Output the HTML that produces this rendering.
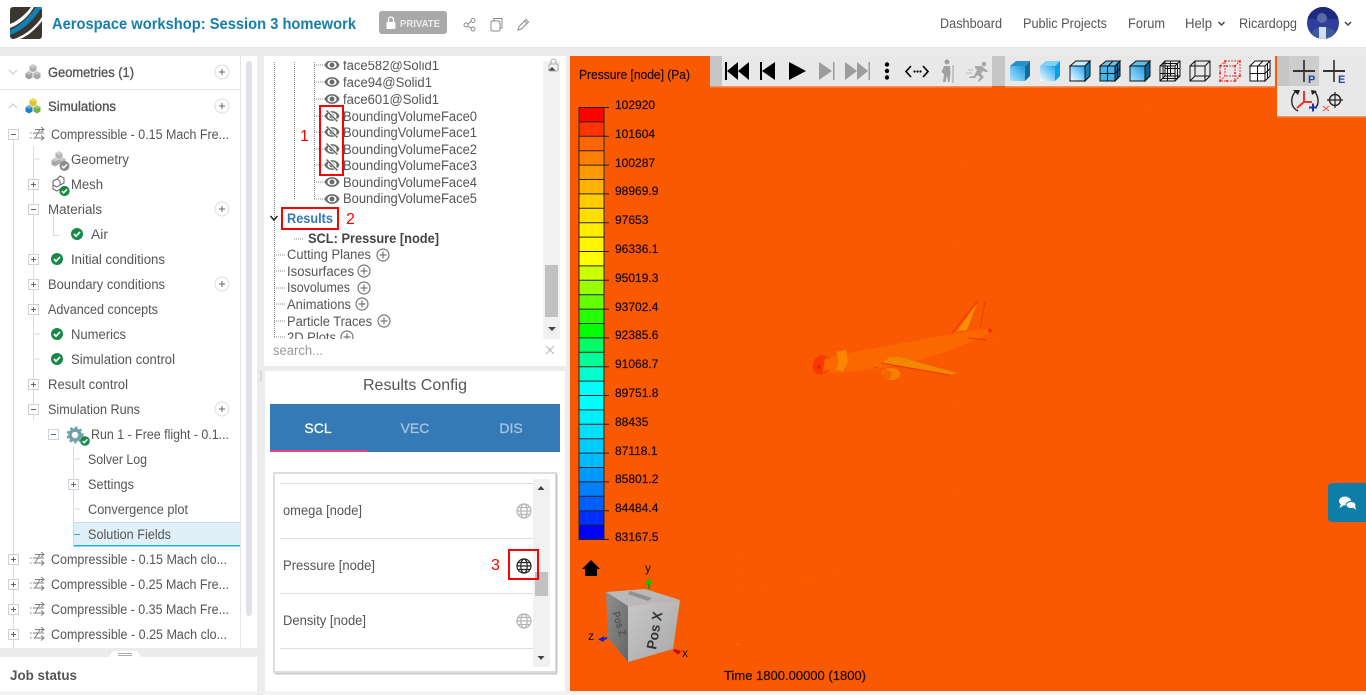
<!DOCTYPE html>
<html lang="en"><head><meta charset="utf-8"><title>Aerospace workshop: Session 3 homework</title>
<style>
html,body{margin:0;padding:0;width:1366px;height:695px;overflow:hidden;background:#ececec}
svg{display:block}
text{font-family:"Liberation Sans",sans-serif}
.t{font-size:13.5px;fill:#555}
.m{font-size:13.5px;fill:#555}
.l{font-size:12px;fill:#1c0a00;stroke:#1c0a00;stroke-width:.2px}
.red{font-size:16px;fill:#f00}
.ln{stroke:#dcdcdc;stroke-width:1;fill:none}
.dot{stroke:#888;stroke-width:1;stroke-dasharray:1 1;fill:none}
</style></head><body>
<svg width="1366" height="695" viewBox="0 0 1366 695" xmlns="http://www.w3.org/2000/svg">
<defs>
<linearGradient id="g1" x1="0" y1="1" x2="1" y2="0"><stop offset="0" stop-color="#a9e6ff"/><stop offset="1" stop-color="#1d96dc"/></linearGradient>
<linearGradient id="g2" x1="0" y1="1" x2="1" y2="0"><stop offset="0" stop-color="#fff"/><stop offset="1" stop-color="#1ea6ee"/></linearGradient>
<linearGradient id="g3" x1="0" y1="0" x2="1" y2="1"><stop offset="0" stop-color="#8f8f8f"/><stop offset="1" stop-color="#666"/></linearGradient>
<linearGradient id="g4" x1="0" y1="0" x2="1" y2="1"><stop offset="0" stop-color="#c8c8c8"/><stop offset="1" stop-color="#a8a8a8"/></linearGradient>
<g id="eye"><path d="M-7.500 0C-5-6.500 5-6.500 7.500 0C5 6.500-5 6.500-7.500 0Z" fill="#6a6a6a"/><ellipse rx="4.600" ry="3.400" fill="#fff"/><circle r="2.500" fill="#6a6a6a"/></g>
<g id="eyex"><use href="#eye"/><path d="M-5-6L6 6" stroke="#fff" stroke-width="3"/><path d="M-5.500-5.500L5.500 5.500" stroke="#666" stroke-width="1.500"/></g>
<g id="ok"><circle r="6" fill="#138a45"/><path d="M-3 0L-1 2.200L3-2" stroke="#fff" stroke-width="1.800" fill="none"/></g>
<g id="okg"><circle r="5" fill="#8c8c8c"/><path d="M-2.500 0L-.8 1.800L2.500-1.700" stroke="#fff" stroke-width="1.400" fill="none"/></g>
<g id="pb"><rect x="-4.500" y="-4.500" width="10" height="10" fill="#fff" stroke="#ccd2d8"/><path d="M-2 .5H3M.5-2V3" stroke="#666"/></g>
<g id="mb"><rect x="-4.500" y="-4.500" width="10" height="10" fill="#fff" stroke="#ccd2d8"/><path d="M-2 .5H3" stroke="#666"/></g>
<g id="pc"><circle r="7" fill="#fff" stroke="#dcdcdc"/><path d="M-3 0H3M0-3V3" stroke="#666"/></g>
<g id="pa"><circle r="6" fill="#fff" stroke="#777" stroke-width="1.200"/><path d="M-3.500 0H3.500M0-3.500V3.500" stroke="#777" stroke-width="1.200"/></g>
<g id="flow" fill="none" stroke="#808080" stroke-width="1"><path d="M-7-1H-5.500M-7 4H-5.500M-4-1H7M-2-4.500H6.500M-3.500 4H6.500M-2 4L3-4.500"/><path d="M4-7L7-4.500L4-2M4 1.500L7 4L4 6.500"/></g>
<g id="cb"><path d="M-3.500-2L0-4L3.500-2V2.500L0 4.500L-3.500 2.500Z"/><path d="M-3.500-2L0-4L3.500-2L0 0Z" fill="#fff" opacity=".35"/></g>
<g id="globe" fill="none" stroke-width="1.200"><circle r="7"/><ellipse rx="3.200" ry="7"/><path d="M-7 0H7M-6-3.500H6M-6 3.500H6"/></g>
<g id="wire" fill="none" stroke="#111" stroke-width="1"><rect x="-10" y="-5" width="15" height="15"/><rect x="-5" y="-10" width="15" height="15"/><path d="M-10-5L-5-10M5-5L10-10M5 10L10 5M-10 10L-5 5"/></g>
<clipPath id="c1"><rect x="266" y="61" width="278" height="278"/></clipPath>
<clipPath id="c2"><circle cx="1323" cy="23" r="16"/></clipPath>
</defs>

<!-- header -->
<rect width="1366" height="47" fill="#fff"/><rect y="47" width="1366" height="2" fill="#e9e9e9"/>
<rect x="10" y="7" width="32" height="32" rx="3" fill="#3a3632"/>
<path d="M10 30C20 26 30 16 36 7H42C34 20 22 31 10 35Z" fill="#1181b3"/>
<path d="M10 24C18 21 26 14 31 7H34C28 17 20 24 10 28Z" fill="#fff"/>
<path d="M14 39C26 35 36 26 42 17V21C36 29 28 36 20 39Z" fill="#fff"/>
<text x="52" y="29" font-size="15.500" font-weight="700" fill="#177ea9" textLength="304" lengthAdjust="spacingAndGlyphs">Aerospace workshop: Session 3 homework</text>
<rect x="379" y="11" width="68" height="23" rx="3" fill="#a9a9a9"/>
<rect x="386.500" y="22" width="9" height="7" rx="1" fill="#fff"/><path d="M388.500 22V19.500a2.500 2.500 0 0 1 5 0V22" fill="none" stroke="#fff" stroke-width="1.300"/>
<text x="400" y="27" font-size="10.500" font-weight="700" fill="#ececec" textLength="40" lengthAdjust="spacingAndGlyphs">PRIVATE</text>
<g fill="none" stroke="#8a8a8a" stroke-width="1"><circle cx="466" cy="25" r="2"/><circle cx="473" cy="20.500" r="2"/><circle cx="473" cy="29" r="2"/><path d="M468 24L471 21.500M468 26L471 28"/>
<rect x="491" y="21" width="9" height="10" rx="1.500"/><path d="M494 21V18.500H502V28H500"/>
<path d="M518 30L519 26.500L526 19.500L528.500 22L521.500 29Z M524.500 21L527 23.500"/></g>
<g font-size="13.500" fill="#555">
<text x="940" y="28" textLength="62" lengthAdjust="spacingAndGlyphs">Dashboard</text>
<text x="1023" y="28" textLength="84" lengthAdjust="spacingAndGlyphs">Public Projects</text>
<text x="1128" y="28" textLength="37" lengthAdjust="spacingAndGlyphs">Forum</text>
<text x="1185" y="28" textLength="27" lengthAdjust="spacingAndGlyphs">Help</text>
<text x="1239" y="28" textLength="58" lengthAdjust="spacingAndGlyphs">Ricardopg</text></g>
<path d="M1218.500 22L1221.500 25L1224.500 22M1345 22L1348 25L1351 22" fill="none" stroke="#444" stroke-width="1.500"/>
<circle cx="1323" cy="23" r="16" fill="#2f3d9c"/>
<g clip-path="url(#c2)"><rect x="1307" y="7" width="32" height="12" fill="#1c2a80"/><circle cx="1322" cy="18" r="5" fill="#5a6aa8"/><path d="M1310 40L1313 30L1320 27H1326L1334 30L1337 40Z" fill="#3e5a9a"/><rect x="1319" y="27" width="7" height="12" fill="#cfe0ea"/></g>

<!-- left panel -->
<rect x="0" y="56" width="257" height="592" fill="#fff"/>
<rect x="240" y="56" width="1" height="592" fill="#e4e4e4"/>
<rect x="246" y="61" width="6" height="555" rx="3" fill="#dee2e6"/>
<rect x="0" y="89" width="240" height="1" fill="#e8e8e8"/>
<path d="M9 70L13 74L17 70M9 108L13 104L17 108" fill="none" stroke="#ccc" stroke-width="1.200"/>
<use href="#cb" x="33" y="68" fill="#b0b0b0"/><use href="#cb" x="29" y="75" fill="#a0a0a0"/><use href="#cb" x="37" y="75" fill="#a8a8a8"/>
<use href="#cb" x="33" y="102" fill="#e0c418"/><use href="#cb" x="29" y="109" fill="#1c7ec4"/><use href="#cb" x="37" y="109" fill="#6cb33f"/>
<text x="48" y="77" font-size="13.500" fill="#555" stroke="#555" stroke-width=".35" textLength="86" lengthAdjust="spacingAndGlyphs">Geometries (1)</text>
<text x="48" y="111" font-size="13.500" fill="#555" stroke="#555" stroke-width=".35" textLength="68" lengthAdjust="spacingAndGlyphs">Simulations</text>
<use href="#pc" x="222" y="72"/><use href="#pc" x="222" y="106"/>
<path class="ln" d="M13.500 139V648M33.500 146V420M33.500 159H40M33.500 334H40M33.500 359H40M53.500 215V235.500H60M73.500 446V534M73.500 459H80M73.500 509H80"/>
<use href="#flow" x="37" y="134"/><use href="#flow" x="37" y="559"/><use href="#flow" x="37" y="584"/><use href="#flow" x="37" y="609"/><use href="#flow" x="37" y="634"/>
<use href="#mb" x="13" y="134"/><use href="#pb" x="33" y="184"/><use href="#mb" x="33" y="209"/><use href="#pb" x="33" y="259"/><use href="#pb" x="33" y="284"/><use href="#pb" x="33" y="309"/><use href="#pb" x="33" y="384"/><use href="#mb" x="33" y="409"/><use href="#mb" x="53" y="434"/><use href="#pb" x="73" y="484"/><use href="#pb" x="13" y="559"/><use href="#pb" x="13" y="584"/><use href="#pb" x="13" y="609"/><use href="#pb" x="13" y="634"/>
<use href="#pc" x="222" y="209"/><use href="#pc" x="222" y="284"/><use href="#pc" x="222" y="409"/>
<use href="#cb" x="59" y="155" fill="#b5b5b5"/><use href="#cb" x="55" y="162" fill="#a8a8a8"/><use href="#cb" x="62" y="161" fill="#b0b0b0"/><use href="#okg" x="64.500" y="166"/>
<g fill="none" stroke="#666"><path d="M53 181L57 179L60 181V185L57 187L53 185Z M57 179L60 176L64 178V183L60 185M53 185V189L57 191L60 189"/></g><use href="#ok" transform="translate(64.500 191) scale(.85)"/>
<use href="#ok" x="77" y="234"/><use href="#ok" x="57" y="259"/><use href="#ok" x="57" y="334"/><use href="#ok" x="57" y="359"/>
<circle cx="75" cy="435" r="5" fill="none" stroke="#6da3a8" stroke-width="3.500"/><circle cx="75" cy="435" r="7.500" fill="none" stroke="#6da3a8" stroke-width="2" stroke-dasharray="2.500 2.500"/><use href="#ok" transform="translate(85 441) scale(.8)"/>
<rect x="73" y="522" width="167" height="24" fill="#e0f0f8"/><rect x="73" y="545" width="167" height="1.500" fill="#19b0ea"/><rect x="73" y="522" width="167" height="1" fill="#c4dbe6"/><rect x="73" y="522" width="1" height="24" fill="#c4dbe6"/><rect x="74" y="534" width="6" height="1" fill="#19b0ea"/>
<text class="t" x="51" y="139" textLength="178" lengthAdjust="spacingAndGlyphs">Compressible - 0.15 Mach Fre...</text>
<text class="t" x="71" y="164" textLength="58" lengthAdjust="spacingAndGlyphs">Geometry</text>
<text class="t" x="71" y="189" textLength="32" lengthAdjust="spacingAndGlyphs">Mesh</text>
<text class="t" x="48" y="214" textLength="54" lengthAdjust="spacingAndGlyphs">Materials</text>
<text class="t" x="91" y="239" textLength="17" lengthAdjust="spacingAndGlyphs">Air</text>
<text class="t" x="71" y="264" textLength="94" lengthAdjust="spacingAndGlyphs">Initial conditions</text>
<text class="t" x="48" y="289" textLength="117" lengthAdjust="spacingAndGlyphs">Boundary conditions</text>
<text class="t" x="48" y="314" textLength="110" lengthAdjust="spacingAndGlyphs">Advanced concepts</text>
<text class="t" x="71" y="339" textLength="55" lengthAdjust="spacingAndGlyphs">Numerics</text>
<text class="t" x="71" y="364" textLength="104" lengthAdjust="spacingAndGlyphs">Simulation control</text>
<text class="t" x="48" y="389" textLength="80" lengthAdjust="spacingAndGlyphs">Result control</text>
<text class="t" x="48" y="414" textLength="92" lengthAdjust="spacingAndGlyphs">Simulation Runs</text>
<text class="t" x="91" y="439" textLength="138" lengthAdjust="spacingAndGlyphs">Run 1 - Free flight - 0.1...</text>
<text class="t" x="88" y="464" textLength="59" lengthAdjust="spacingAndGlyphs">Solver Log</text>
<text class="t" x="88" y="489" textLength="46" lengthAdjust="spacingAndGlyphs">Settings</text>
<text class="t" x="88" y="514" textLength="100" lengthAdjust="spacingAndGlyphs">Convergence plot</text>
<text class="t" x="88" y="539" textLength="83" lengthAdjust="spacingAndGlyphs">Solution Fields</text>
<text class="t" x="51" y="564" textLength="176" lengthAdjust="spacingAndGlyphs">Compressible - 0.15 Mach clo...</text>
<text class="t" x="51" y="589" textLength="178" lengthAdjust="spacingAndGlyphs">Compressible - 0.25 Mach Fre...</text>
<text class="t" x="51" y="614" textLength="178" lengthAdjust="spacingAndGlyphs">Compressible - 0.35 Mach Fre...</text>
<text class="t" x="51" y="639" textLength="176" lengthAdjust="spacingAndGlyphs">Compressible - 0.25 Mach clo...</text>
<!-- job status -->
<path d="M109 657L113 651H137L141 657Z" fill="#fff"/><path d="M118 653.500H132M118 655.500H132" stroke="#aaa"/>
<rect x="0" y="657" width="257" height="36" fill="#fff"/>
<text x="10" y="680" font-size="14" font-weight="700" fill="#555" textLength="67" lengthAdjust="spacingAndGlyphs">Job status</text>

<!-- middle top panel -->
<rect x="260" y="370" width="2" height="12" fill="#dcdcdc"/>
<rect x="264" y="56" width="302" height="310" fill="#fff"/>
<rect x="543" y="61" width="17" height="278" fill="#f1f1f1"/>
<rect x="545" y="265" width="13" height="52" fill="#c1c1c1"/>
<path d="M548 71L552 67L556 71Z M548 327H556L552 331Z" fill="#444"/>
<rect x="549" y="64" width="9" height="7" rx="1" fill="none" stroke="#aaa"/><path d="M551 64V61.500a2.500 2.500 0 0 1 5 0V64" fill="none" stroke="#aaa"/>
<g clip-path="url(#c1)">
<path class="dot" d="M274.500 60V338M294.500 60V199M314.500 60V199M314 65H325M314 82H325M314 99H325M314 116H325M314 132H325M314 149H325M314 165H325M314 182H325M314 199H325M294 239H304M274 255H285M274 271H285M274 288H285M274 304H285M274 321H285M274 337H285"/>
<use href="#eye" x="332" y="65"/><use href="#eye" x="332" y="82"/><use href="#eye" x="332" y="99"/><use href="#eyex" x="332" y="116"/><use href="#eyex" x="332" y="132"/><use href="#eyex" x="332" y="149"/><use href="#eyex" x="332" y="165"/><use href="#eye" x="332" y="182"/><use href="#eye" x="332" y="199"/>
<text class="m" x="343" y="70" textLength="96" lengthAdjust="spacingAndGlyphs">face582@Solid1</text>
<text class="m" x="343" y="87" textLength="89" lengthAdjust="spacingAndGlyphs">face94@Solid1</text>
<text class="m" x="343" y="104" textLength="96" lengthAdjust="spacingAndGlyphs">face601@Solid1</text>
<text class="m" x="343" y="121" textLength="134" lengthAdjust="spacingAndGlyphs">BoundingVolumeFace0</text>
<text class="m" x="343" y="137" textLength="134" lengthAdjust="spacingAndGlyphs">BoundingVolumeFace1</text>
<text class="m" x="343" y="154" textLength="134" lengthAdjust="spacingAndGlyphs">BoundingVolumeFace2</text>
<text class="m" x="343" y="170" textLength="134" lengthAdjust="spacingAndGlyphs">BoundingVolumeFace3</text>
<text class="m" x="343" y="187" textLength="134" lengthAdjust="spacingAndGlyphs">BoundingVolumeFace4</text>
<text class="m" x="343" y="203" textLength="134" lengthAdjust="spacingAndGlyphs">BoundingVolumeFace5</text>
<path d="M270.500 216L274 220L277.500 216" fill="none" stroke="#222" stroke-width="1.500"/>
<text x="287" y="223" font-size="13.500" font-weight="700" fill="#337ab7" textLength="46" lengthAdjust="spacingAndGlyphs">Results</text>
<text x="308" y="243" font-size="13.500" font-weight="700" fill="#444" textLength="131" lengthAdjust="spacingAndGlyphs">SCL: Pressure [node]</text>
<text class="m" x="287" y="259" textLength="84" lengthAdjust="spacingAndGlyphs">Cutting Planes</text>
<text class="m" x="287" y="276" textLength="67" lengthAdjust="spacingAndGlyphs">Isosurfaces</text>
<text class="m" x="287" y="292" textLength="63" lengthAdjust="spacingAndGlyphs">Isovolumes</text>
<text class="m" x="287" y="309" textLength="64" lengthAdjust="spacingAndGlyphs">Animations</text>
<text class="m" x="287" y="326" textLength="85" lengthAdjust="spacingAndGlyphs">Particle Traces</text>
<text class="m" x="287" y="342" textLength="49" lengthAdjust="spacingAndGlyphs">2D Plots</text>
<use href="#pa" x="383" y="255"/><use href="#pa" x="364" y="271"/><use href="#pa" x="364" y="288"/><use href="#pa" x="362" y="304"/><use href="#pa" x="384" y="321"/><use href="#pa" x="347" y="337"/>
</g>
<text x="273" y="355" font-size="13.500" fill="#999" textLength="50" lengthAdjust="spacingAndGlyphs">search...</text>
<path d="M546 346L554 354M554 346L546 354" stroke="#bbb" stroke-width="1.200"/>
<rect x="320" y="106" width="23" height="69" fill="none" stroke="#f00" stroke-width="2"/>
<rect x="282" y="208" width="56" height="21" fill="none" stroke="#f00" stroke-width="2"/>
<text class="red" x="300" y="141">1</text><text class="red" x="346" y="224">2</text>

<!-- results config -->
<rect x="265" y="371" width="300" height="323" fill="#fff"/>
<text x="363" y="390" font-size="16" fill="#555" textLength="104" lengthAdjust="spacingAndGlyphs">Results Config</text>
<rect x="270" y="404" width="290" height="48" fill="#337ab7"/>
<rect x="270" y="450" width="97" height="2" fill="#ee3f80"/>
<text x="318" y="433" font-size="14" text-anchor="middle" fill="#fff" stroke="#fff" stroke-width=".3">SCL</text>
<text x="415" y="433" font-size="14" text-anchor="middle" fill="#a9c4de" stroke="#a9c4de" stroke-width=".3">VEC</text>
<text x="511" y="433" font-size="14" text-anchor="middle" fill="#a9c4de" stroke="#a9c4de" stroke-width=".3">DIS</text>
<rect x="274" y="473" width="282" height="199" fill="#fff" stroke="#ddd" stroke-width="2"/>
<rect x="556" y="474" width="1.500" height="200" fill="#c8c8c8"/><rect x="275" y="673" width="282" height="1.500" fill="#c8c8c8"/>
<path d="M280 483.500H533M280 538.500H533M280 593.500H533M280 648.500H533" stroke="#ddd"/>
<rect x="533" y="479" width="17" height="188" fill="#f1f1f1"/>
<rect x="535" y="572" width="13" height="24" fill="#c1c1c1"/>
<path d="M537.500 490L541 486L544.500 490Z M537.500 656H544.500L541 660Z" fill="#444"/>
<text class="m" x="283" y="515" textLength="79" lengthAdjust="spacingAndGlyphs">omega [node]</text>
<text class="m" x="283" y="570" textLength="92" lengthAdjust="spacingAndGlyphs">Pressure [node]</text>
<text class="m" x="283" y="625" textLength="83" lengthAdjust="spacingAndGlyphs">Density [node]</text>
<use href="#globe" x="524" y="511" stroke="#b5b5b5"/><use href="#globe" x="524" y="566" stroke="#222"/><use href="#globe" x="524" y="621" stroke="#b5b5b5"/>
<rect x="509" y="550" width="29" height="29" fill="none" stroke="#f00" stroke-width="2"/>
<text class="red" x="491" y="570">3</text>

<!-- viewer -->
<rect x="570" y="56" width="796" height="635" fill="#f95900"/>
<rect x="0" y="691" width="1366" height="4" fill="#f3f3f3"/><rect x="257" y="693" width="6" height="2" fill="#ececec"/>
<g fill="#ff8a3a" opacity=".55"><rect x="741" y="558" width="1" height="1"/><rect x="742" y="573" width="1" height="1"/><rect x="743" y="587" width="1" height="1"/><rect x="760" y="586" width="1" height="1"/><rect x="800" y="580" width="1" height="1"/><rect x="810" y="577" width="1" height="1"/><rect x="835" y="574" width="1" height="1"/><rect x="737" y="644" width="3" height="1"/><rect x="960" y="160" width="1" height="1"/><rect x="958" y="240" width="1" height="1"/><rect x="955" y="400" width="1" height="1"/><rect x="955" y="490" width="1" height="1"/><rect x="1148" y="105" width="1" height="1"/></g>
<text class="l" x="579" y="79" style="font-size:12.500px" textLength="111" lengthAdjust="spacingAndGlyphs">Pressure [node] (Pa)</text>
<!-- colorbar -->
<g stroke="none">
<rect x="579" y="107.500" width="25" height="14.400" fill="#ff0000"/><rect x="579" y="121.900" width="25" height="14.400" fill="#ff3300"/><rect x="579" y="136.300" width="25" height="14.400" fill="#ff6600"/><rect x="579" y="150.700" width="25" height="14.400" fill="#ff8000"/><rect x="579" y="165.100" width="25" height="14.400" fill="#ff9900"/><rect x="579" y="179.500" width="25" height="14.400" fill="#ffb300"/><rect x="579" y="193.900" width="25" height="14.400" fill="#ffcc00"/><rect x="579" y="208.300" width="25" height="14.400" fill="#ffdf00"/><rect x="579" y="222.700" width="25" height="14.400" fill="#ffee00"/><rect x="579" y="237.100" width="25" height="14.400" fill="#fff700"/><rect x="579" y="251.500" width="25" height="14.400" fill="#ffff00"/><rect x="579" y="265.900" width="25" height="14.400" fill="#ccff00"/><rect x="579" y="280.300" width="25" height="14.400" fill="#99ff00"/><rect x="579" y="294.700" width="25" height="14.400" fill="#66ff00"/><rect x="579" y="309.100" width="25" height="14.400" fill="#22ff00"/><rect x="579" y="323.500" width="25" height="14.400" fill="#00ff00"/><rect x="579" y="337.900" width="25" height="14.400" fill="#00ff66"/><rect x="579" y="352.300" width="25" height="14.400" fill="#00ff99"/><rect x="579" y="366.700" width="25" height="14.400" fill="#00ffcc"/><rect x="579" y="381.100" width="25" height="14.400" fill="#00ffff"/><rect x="579" y="395.500" width="25" height="14.400" fill="#00ffff"/><rect x="579" y="409.900" width="25" height="14.400" fill="#00f0ff"/><rect x="579" y="424.300" width="25" height="14.400" fill="#00e0ff"/><rect x="579" y="438.700" width="25" height="14.400" fill="#00ccff"/><rect x="579" y="453.100" width="25" height="14.400" fill="#00bbff"/><rect x="579" y="467.500" width="25" height="14.400" fill="#0099ff"/><rect x="579" y="481.900" width="25" height="14.400" fill="#0080ff"/><rect x="579" y="496.300" width="25" height="14.400" fill="#0060ff"/><rect x="579" y="510.700" width="25" height="14.400" fill="#0030ff"/><rect x="579" y="525.100" width="25" height="14.400" fill="#0000ff"/>
</g>
<path d="M579 107.500V539.500H604V107.500M579 107.500H609M579 121.900H604M579 136.300H609M579 150.700H604M579 165.100H609M579 179.500H604M579 193.900H609M579 208.300H604M579 222.700H609M579 237.100H604M579 251.500H609M579 265.900H604M579 280.300H609M579 294.700H604M579 309.100H609M579 323.500H604M579 337.900H609M579 352.300H604M579 366.700H609M579 381.100H604M579 395.500H609M579 409.900H604M579 424.300H609M579 438.700H604M579 453.100H609M579 467.500H604M579 481.900H609M579 496.300H604M579 510.700H609M579 525.100H604M604 539.500H609" fill="none" stroke="#222" stroke-width="1"/>
<text class="l" x="615" y="109">102920</text><text class="l" x="615" y="138">101604</text><text class="l" x="615" y="167">100287</text><text class="l" x="615" y="195">98969.9</text><text class="l" x="615" y="224">97653</text><text class="l" x="615" y="253">96336.1</text><text class="l" x="615" y="282">95019.3</text><text class="l" x="615" y="311">93702.4</text><text class="l" x="615" y="339">92385.6</text><text class="l" x="615" y="368">91068.7</text><text class="l" x="615" y="397">89751.8</text><text class="l" x="615" y="426">88435</text><text class="l" x="615" y="455">87118.1</text><text class="l" x="615" y="483">85801.2</text><text class="l" x="615" y="512">84484.4</text><text class="l" x="615" y="541">83167.5</text>
<!-- plane -->
<g>
<path d="M830 357C890 345 960 332 988 329L991 332C975 340 950 352 925 358C890 368 860 371 830 373Z" fill="#fb6800"/>
<path d="M836 352L846 350L848 362L843 371L836 370C839 364 839 358 836 352Z" fill="#fb8600"/>
<ellipse cx="821" cy="365" rx="8" ry="10" transform="rotate(20 821 365)" fill="#f83a00"/><path d="M825 358L831 360L830 368L823 372Z" fill="#fb6c00"/><circle cx="819" cy="367" r="1.500" fill="#e01800"/>
<path d="M957 331L977 303L967 330Z" fill="#fb9000"/><path d="M952 333L977 302" stroke="#f03800" stroke-width="1" fill="none"/><path d="M985 302L980 328" stroke="#f44000" fill="none"/>
<path d="M882 363L890 357L900 357L917 362L957 373L950 375Z" fill="#f08800"/><path d="M881 363L950 375" stroke="#f43000" stroke-width="1"/>
<circle cx="990" cy="330.500" r="2" fill="#f03000"/><path d="M968 338L996 341L998 341L978 339Z" fill="#f07a00"/><path d="M968 338L986 340" stroke="#f43000"/>
<ellipse cx="891" cy="374" rx="9" ry="6" fill="#f48400"/><ellipse cx="887" cy="375" rx="4.500" ry="5" fill="#f26500"/><path d="M871 368L880 366L877 368Z" fill="#f04500"/>
</g>
<!-- home, axes, cube -->
<path d="M591 560L600 569H597V576H585V569H582Z" fill="#000"/>
<polygon points="606,592 645,589 680,600 628,606" fill="#b9b9b9"/>
<polygon points="628,606 680,600 673,649 628,662" fill="url(#g4)"/>
<polygon points="606,592 628,606 628,662 608,638" fill="url(#g3)"/>
<text transform="translate(656 650) rotate(-80)" font-size="14" font-weight="700" fill="#333" textLength="38" lengthAdjust="spacingAndGlyphs">Pos X</text>
<text transform="translate(612 613) rotate(72)" font-size="11" font-weight="700" fill="#444" opacity=".7" textLength="25" lengthAdjust="spacingAndGlyphs">Pos Z</text>
<path d="M630 591L652 598L648 601L628 594Z" fill="#555" opacity=".4"/>
<path d="M649 589V582" stroke="#0a0" stroke-width="2"/><path d="M645.500 584L649 578L652.500 584Z" fill="#0c0"/>
<path d="M607 638L601 639.500" stroke="#1020d0" stroke-width="2"/><path d="M604 636L598 639.500L604 642Z" fill="#1020d0"/>
<path d="M674 650L679 653" stroke="#c00" stroke-width="2.500"/><path d="M674 649L681 651L678 655Z" fill="#d00000"/>
<text x="645" y="572" font-size="12" fill="#111">y</text><text x="588" y="640" font-size="12" fill="#111">z</text><text x="682" y="657" font-size="12" fill="#111">x</text>
<text class="l" x="724" y="680" style="font-size:13px" textLength="142" lengthAdjust="spacingAndGlyphs">Time 1800.00000 (1800)</text>

<!-- toolbars -->
<rect x="710" y="86" width="282" height="1.500" fill="#f4905a"/><rect x="1005" y="86" width="270" height="1.500" fill="#f4905a"/><rect x="1277" y="116" width="89" height="1.500" fill="#f4905a"/>
<rect x="710" y="56" width="282" height="30" fill="#e8e8e8"/><rect x="710" y="56" width="12" height="30" fill="#c6c6c6"/>
<rect x="992" y="56" width="13" height="30" fill="#c6c6c6"/><rect x="1005" y="56" width="270" height="30" fill="#e8e8e8"/>
<rect x="1277" y="56" width="89" height="60" fill="#e8e8e8"/><rect x="1277" y="56" width="12" height="30" fill="#c6c6c6"/><rect x="1289" y="56" width="30" height="30" fill="#cdcdcd"/>
<rect x="725" y="62" width="2" height="18" fill="#000"/><path d="M727 71L738 62V80Z M738 71L749 62V80Z" fill="#000"/>
<rect x="760" y="62" width="2" height="18" fill="#000"/><path d="M762 71L775 62V80Z" fill="#000"/>
<path d="M789 62L806 71L789 80Z" fill="#000"/>
<path d="M819 62L832 71L819 80Z" fill="#9c9c9c"/><rect x="833" y="62" width="1.500" height="18" fill="#9c9c9c"/>
<path d="M845 62L857 71L845 80Z M857 62L868 71L857 80Z" fill="#9c9c9c"/><rect x="868.500" y="62" width="1.500" height="18" fill="#9c9c9c"/>
<circle cx="887" cy="64.500" r="2.200"/><circle cx="887" cy="71" r="2.200"/><circle cx="887" cy="77.500" r="2.200"/>
<path d="M911 66L906 71.500L911 77M923 66L928 71.500L923 77" fill="none" stroke="#000" stroke-width="1.600"/><circle cx="914.500" cy="71.500" r="1.100"/><circle cx="917.500" cy="71.500" r="1.100"/><circle cx="920.500" cy="71.500" r="1.100"/>
<g fill="#a0a0a0"><circle cx="947" cy="62" r="2.500"/><path d="M944 66H950L950.500 73L949.500 82H948L947 75L945.500 82H943L944 74L941.500 72Z"/><rect x="952.500" y="65" width="1" height="18"/></g>
<g fill="#a8a8a8"><circle cx="984" cy="64" r="2.300"/><path d="M975 66L982 66L985 69L988 71L987 72.500L983 71L981 74L984 77L979 82L978 80.500L980.500 77L977 75L975 78L969 78L970 76.500L974 76L977 70L975 68Z"/><path d="M968 70H973M966 73H972" stroke="#bbb"/></g>
<!-- cubes -->
<g transform="translate(1020 71)"><rect x="-10" y="-5" width="15" height="15" fill="url(#g1)"/><polygon points="5,-5 10,-10 10,5 5,10" fill="#136a9b"/><polygon points="-10,-5 -4,-10 10,-10 5,-5" fill="#2b8fca"/></g>
<g transform="translate(1050 71)"><rect x="-10" y="-5" width="15" height="15" fill="url(#g2)"/><polygon points="-10,-5 -4,-10 10,-10 5,-5" fill="#7dd0f8"/><polygon points="5,-5 10,-10 10,5 5,10" fill="#08a0ea"/></g>
<g transform="translate(1080 71)" stroke="#111"><rect x="-10" y="-5" width="15" height="15" fill="url(#g2)"/><polygon points="-10,-5 -4,-10 10,-10 5,-5" fill="#c8ecff"/><polygon points="5,-5 10,-10 10,5 5,10" fill="#1680bc"/></g>
<g transform="translate(1110 71)" stroke="#111"><rect x="-10" y="-5" width="15" height="15" fill="#49b4ea"/><polygon points="-10,-5 -4,-10 10,-10 5,-5" fill="#6cc4ee"/><polygon points="5,-5 10,-10 10,5 5,10" fill="#126a9e"/><path d="M-2.500-5V10M-10 2.500H5M-2-5L3-10M7.500-7.500V7.500M5 2.500L10-2.500" fill="none"/></g>
<g transform="translate(1140 71)" stroke="#111"><rect x="-10" y="-5" width="15" height="15" fill="url(#g1)"/><polygon points="-10,-5 -4,-10 10,-10 5,-5" fill="#5fbde8"/><polygon points="5,-5 10,-10 10,5 5,10" fill="#0f5f8f"/></g>
<g transform="translate(1170 71)"><use href="#wire"/><path d="M-2.500-5V10M-10 2.500H5M.5-10V5M-5-2.500H10M-7-7.500H7.500M7.500-7.500V7.500M-7-7.500V7.500M-7 7.500H7.500" stroke="#111" fill="none"/></g>
<g transform="translate(1200 71)"><use href="#wire"/></g>
<g transform="translate(1230 71)" fill="none" stroke="#e33" stroke-width="1" stroke-dasharray="2 1"><rect x="-10" y="-5" width="15" height="15"/><rect x="-5" y="-10" width="15" height="15"/><path d="M-10-5L-5-10M5-5L10-10M5 10L10 5M-10 10L-5 5"/></g>
<g fill="#e22"><circle cx="1220" cy="66" r="1"/><circle cx="1235" cy="66" r="1"/><circle cx="1220" cy="81" r="1"/><circle cx="1235" cy="81" r="1"/><circle cx="1225" cy="61" r="1"/><circle cx="1240" cy="61" r="1"/><circle cx="1240" cy="76" r="1"/><circle cx="1227" cy="66" r="1"/><circle cx="1227" cy="81" r="1"/><circle cx="1220" cy="73" r="1"/><circle cx="1235" cy="73" r="1"/></g>
<g transform="translate(1260 71)"><rect x="-10" y="-5" width="15" height="15" fill="#fff" stroke="#111"/><polygon points="-10,-5 -5,-10 10,-10 5,-5" fill="#fff" stroke="#111"/><polygon points="5,-5 10,-10 10,5 5,10" fill="#fff" stroke="#111"/><path d="M-2.500-5V10M-10 2.500H5M-2-5L3-10M7.500-7.500V7.500M5 2.500L10-2.500" stroke="#111" fill="none"/></g>
<!-- axis tools -->
<path d="M1304 60V82M1334 60V82" stroke="#222" stroke-width="1.500"/>
<rect x="1293" y="70" width="22" height="2" fill="#333"/><rect x="1323" y="70" width="22" height="2" fill="#333"/>
<text x="1308" y="83" font-size="11" font-weight="700" fill="#2a3fa8">P</text><text x="1338" y="83" font-size="11" font-weight="700" fill="#2a3fa8">E</text>
<path d="M1296 91C1290 97 1290 107 1298 111M1314 91C1319 96 1319 104 1316 107" fill="none" stroke="#222" stroke-width="1.400"/>
<path d="M1293 90L1300 90L1298 95ZM1311 90L1317 91L1312 95Z" fill="#222"/>
<path d="M1304 91V102L1297 108M1304 102H1312" fill="none" stroke="#e33" stroke-width="2"/>
<path d="M1309 107.500H1317M1313 103.500V111.500" stroke="#23a" stroke-width="2"/>
<circle cx="1335" cy="100" r="5.500" fill="none" stroke="#222" stroke-width="1.400"/><path d="M1327 100H1343M1335 92V108" stroke="#222" stroke-width="1.200"/>
<path d="M1323 111L1329 106M1323 106L1329 111" stroke="#e55" stroke-width="1"/>
<!-- chat -->
<path d="M1332 483H1366V522H1332A4 4 0 0 1 1328 518V487A4 4 0 0 1 1332 483Z" fill="#0e7ea8"/>
<ellipse cx="1345" cy="501" rx="6" ry="4.500" fill="#fff"/><path d="M1341 504L1339.500 508L1344 505Z" fill="#fff"/>
<ellipse cx="1351" cy="505" rx="5" ry="3.500" fill="#fff" stroke="#0e7ea8"/><path d="M1353 507.500L1356 510L1355 506Z" fill="#fff"/>
</svg>
</body></html>
